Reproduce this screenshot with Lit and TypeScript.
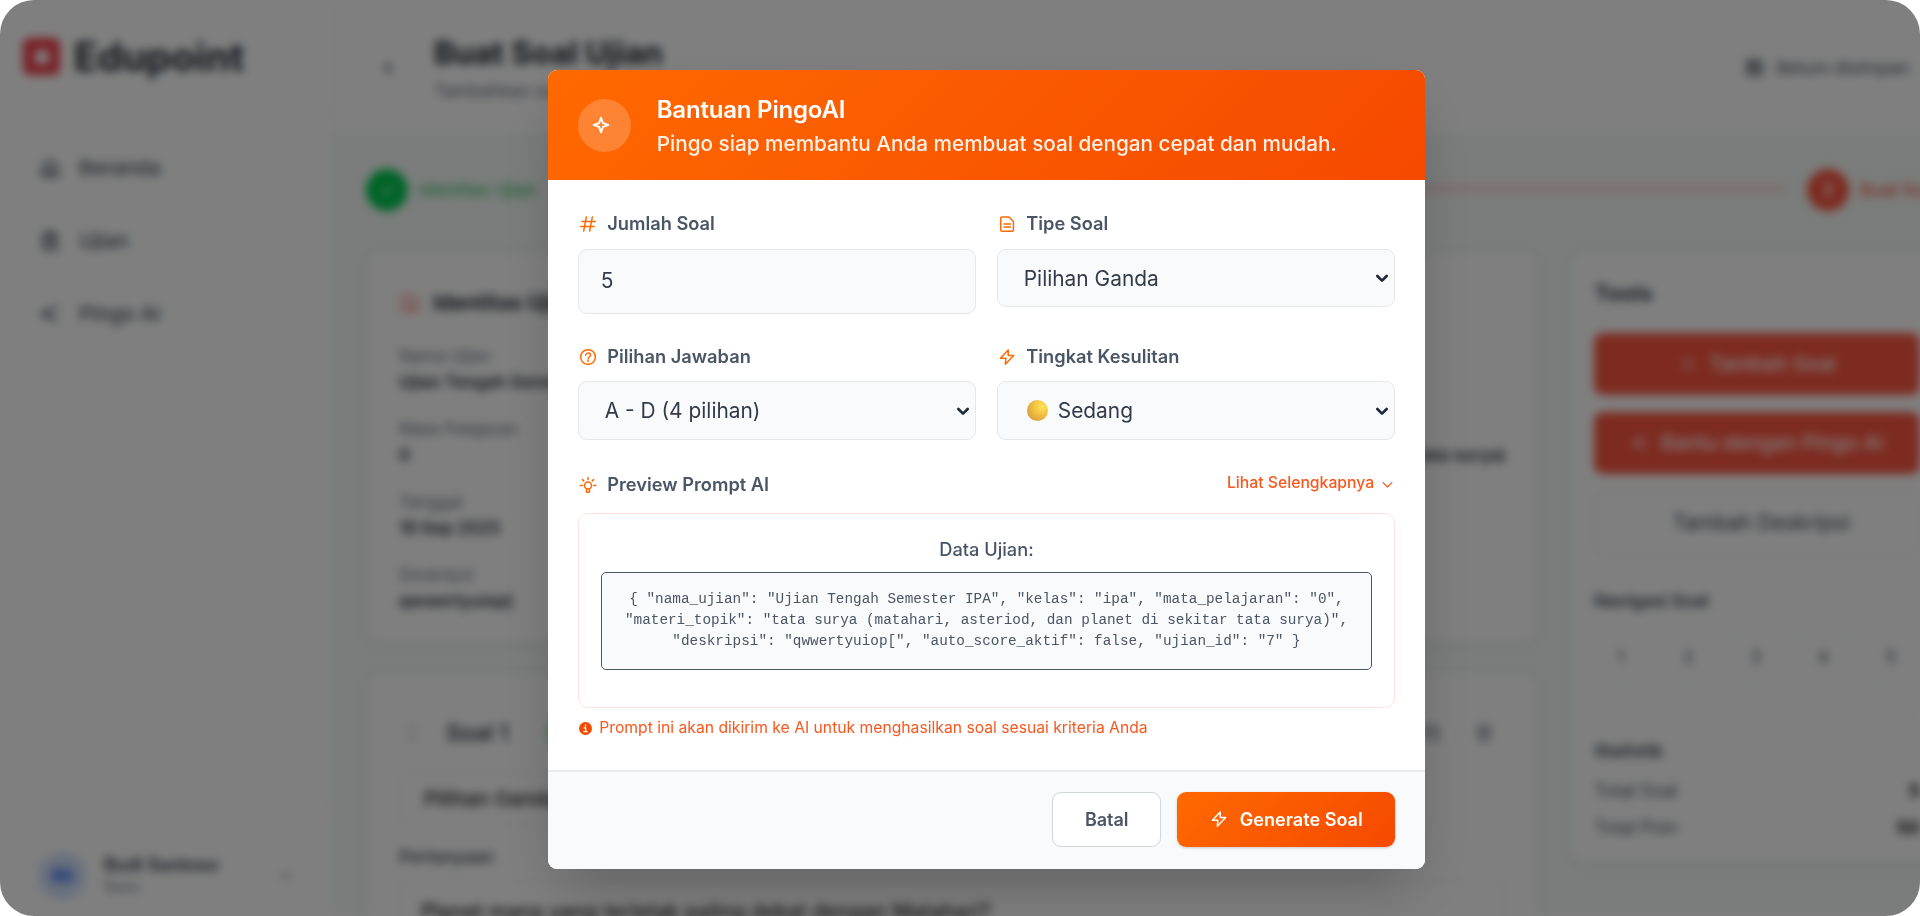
import { LitElement, html, css, svg, nothing } from "lit";
import { customElement, property } from "lit/decorators.js";

const glyphs: Record<string, unknown> = {
  sparkle: svg`<path d="M12 3.2 14.3 9.7 20.8 12 14.3 14.3 12 20.8 9.7 14.3 3.2 12 9.7 9.7Z"/>`,
  hash: svg`<path d="M9.8 2.6 6.2 21.4M17.8 2.6 14.2 21.400M3.800 8.600h18M2.200 15.400h18"/>`,
  file: svg`<path d="M6 2.6h8.6L20.6 8.6V19.6a2 2 0 0 1-2 2H5.6a2 2 0 0 1-2-2V4.6a2 2 0 0 1 2-2ZM8 12h8.6M8 16h8.6"/>`,
  help: svg`<circle cx="12" cy="12" r="9.8"/><path d="M8.8 9.2c.4-1.9 1.7-2.6 3.4-2.6 2 0 3.3 1.100 3.300 2.800 0 2.300-3.300 2.300-3.300 4.800M12.100 16.400v1.500"/>`,
  bolt: svg`<path d="M13.600 2.600 3.200 13.600H10.400L9.800 21.600 20.800 10H13.600Z"/>`,
  bulb: svg`<circle cx="12" cy="12.600" r="4.700"/><path d="M10 17v3.600a1 1 0 0 0 1 1h2a1 1 0 0 0 1-1V17M12 2v2.500M1.600 12.600h2.600M19.800 12.600h2.600M4.600 4.800 6.300 6.500M19.400 4.800 17.700 6.500"/>`,
  chevron: svg`<path d="m5 9 7 7 7-7"/>`,
  home: svg`<path d="M3.500 10.500 12 3.500l8.500 7v10h-17ZM9 20v-6h6v6"/>`,
  clip: svg`<path d="M5 4.500h14v16.500H5ZM9 3h6v3H9ZM9 11h6M9 15h6"/>`,
  share: svg`<path d="M20 4 5 12l15 8M4 9.500v5M9 8v8"/>`,
  back: svg`<path d="M15 7 9 12l6 5"/>`,
  save: svg`<path d="M4 4h13l3 3v13H4ZM8 4v5h7V4M8 20v-7h8v7"/>`,
  check: svg`<path d="m5 12.500 4.500 4.500L19 7.500"/>`,
  plus: svg`<path d="M12 5v14M5 12h14"/>`,
  grip: svg`<path d="M9 5v.1M9 12v.1M9 19v.1M15 5v.1M15 12v.1M15 19v.1"/>`,
  copy: svg`<path d="M8 8h12v12H8ZM16 8V4H4v12h4"/>`,
  trash: svg`<path d="M4 6.500h16M6 6.500V21h12V6.500M9 6V3h6v3M10 11v6M14 11v6"/>`,
  info: svg`<circle cx="12" cy="12" r="12" fill="currentColor" stroke="none"/><path d="M12 5.500v2.200M9.500 11h2.800v6.500M9 17.800h6" stroke="#fff" stroke-width="2.400"/>`,
};

@customElement("ui-icon")
export class UiIcon extends LitElement {
  @property() name = "";
  @property({ type: Number }) size = 18;
  @property({ type: Number }) weight = 2;
  static styles = css`
    :host { display: inline-flex; flex: none; }
    svg { display: block; fill: none; stroke: currentColor; stroke-linecap: round; stroke-linejoin: round; }
  `;
  render() {
    return html`<svg width=${this.size} height=${this.size} viewBox="0 0 24 24" stroke-width=${this.weight}>
      ${glyphs[this.name] ?? nothing}
    </svg>`;
  }
}

@customElement("exam-page")
export class ExamPage extends LitElement {
  static styles = css`
    :host { display: grid; grid-template-columns: 334px 1fr; width: 1944px; height: 916px; background: #f5faf7; font-size: 17.5px; line-height: 26px; color: #374151; }
    .side { display: flex; flex-direction: column; background: #fff; border-right: 1px solid #e5e7eb; box-sizing: border-box; height: 916px; }
    .brand { display: flex; align-items: center; gap: 14px; height: 114px; box-sizing: border-box; padding-left: 23px; border-bottom: 1px solid #e9eaec; font-size: 39px; font-weight: 700; color: #1f2937; }
    .logo { display: grid; place-items: center; width: 37px; height: 37px; border-radius: 7px; background: #f2404a; }
    .dot { width: 14px; height: 14px; border-radius: 4px; background: #fff; }
    nav { display: flex; flex-direction: column; gap: 47px; padding: 41px 0 0 39px; flex: 1; color: #4b5563; font-size: 20.500px; font-weight: 500; }
    .item { display: flex; align-items: center; gap: 18px; }
    .user { display: flex; align-items: center; gap: 18px; height: 106px; box-sizing: border-box; border-top: 1px solid #e9eaec; padding: 24px 40px 0 38px; }
    .avatar { display: grid; place-items: center; width: 48px; height: 48px; border-radius: 50%; background: #d3e2fe; color: #2563eb; font-weight: 700; font-size: 18px; letter-spacing: -1px; }
    .who { flex: 1; line-height: 22px; font-size: 15.300px; color: #6b7280; }
    .who b { display: block; font-size: 18px; font-weight: 600; color: #374151; }
    .main { display: flex; flex-direction: column; min-width: 0; height: 916px; }
    header { display: flex; flex: none; height: 136px; box-sizing: border-box; background: #fff; border-bottom: 1px solid #e5e7eb; padding: 0 34px 0 43px; align-items: center; color: #4b5563; }
    .ttl { flex: 1; margin-left: 35px; padding-top: 1px; font-size: 17.500px; color: #6b7280; }
    .ttl b { display: block; font-size: 31.300px; line-height: 46px; color: #1f2937; }
    .ttl div { line-height: 30px; }
    .status { display: flex; gap: 12px; align-items: center; font-size: 17.800px; }
    .steps { display: flex; flex: none; align-items: center; height: 108px; padding-left: 32px; font-size: 17.500px; font-weight: 500; }
    .num { display: grid; place-items: center; width: 42px; height: 42px; border-radius: 50%; color: #fff; background: #00c950; font-weight: 600; }
    .name { color: #22b85c; margin-left: 11px; width: 130px; font-weight: 400; }
    .line { flex: 1; height: 5px; background: #ffcfc9; margin: 0 22px 4px 20px; }
    .red { background: #fb5640; }
    .two { color: #fb5640; width: 84px; white-space: nowrap; font-weight: 500; }
    .cols { display: flex; gap: 32px; align-items: flex-start; padding-left: 33px; margin-top: 8px; }
    .card { background: #fff; border-radius: 14px; box-shadow: 0 1px 4px #0002; border: 1px solid #edeff1; box-sizing: border-box; }
    .left { width: 1172px; display: flex; flex-direction: column; gap: 31px; }
    .ident { height: 391px; padding: 35px 31px; }
    .head { display: flex; align-items: center; gap: 12px; color: #1f2937; font-size: 20.800px; font-weight: 700; line-height: 30px; margin-bottom: 26px; }
    .head ui-icon { color: #f77a70; }
    .facts { display: grid; grid-template-columns: 1fr 1fr; row-gap: 22px; line-height: 25.500px; color: #6b7280; font-size: 17px; }
    .facts b { display: block; font-weight: 600; color: #1f2937; white-space: nowrap; }
    .end { justify-self: end; }
    .q { height: 300px; padding: 44px 31px; }
    .qhead { display: flex; align-items: center; gap: 21px; font-size: 22.500px; font-weight: 600; color: #374151; padding-right: 12px; }
    .qhead ui-icon { color: #6b7280; }
    .tag { width: 90px; height: 28px; border-radius: 14px; background: #a5f0c0; margin-left: 16px; }
    .grow { flex: 1; }
    .gap { margin-left: 11px; }
    .field { border: 1px solid #e2e4e8; border-radius: 9px; color: #222; font-size: 20.500px; font-weight: 500; padding: 12px 24px; margin-top: 26px; width: 330px; box-sizing: border-box; }
    .lab { margin-top: 21px; font-weight: 500; font-size: 17.500px; line-height: 22px; }
    .area { width: auto; margin: 13px 0 0; padding: 17px 21px; height: 100px; font-size: 20.800px; }
    .right { width: 374px; height: 611px; padding: 27px 23px; }
    .right h3 { margin: 0 0 26px; font-size: 22px; line-height: 27px; color: #374151; }
    .btn { display: flex; align-items: center; justify-content: center; gap: 12px; height: 62px; border-radius: 9px; background: #fb5640; color: #fff; font-size: 20.500px; font-weight: 500; margin-bottom: 17px; }
    .out { background: #fff; border: 1px solid #dfe2e6; color: #374151; height: 62px; margin-bottom: 34px; font-weight: 400; font-size: 21px; padding-left: 8px; }
    h4 { margin: 0; font-size: 17.500px; line-height: 24px; font-weight: 600; color: #374151; }
    .grid { display: flex; gap: 14.500px; margin: 18px 0 31px; }
    .grid span { display: grid; place-items: center; width: 53px; height: 52px; box-sizing: border-box; border: 1px solid #eceef1; border-radius: 8px; color: #4b5563; flex: none; }
    .stat { border-top: 1px solid #e5e7eb; padding-top: 24px; }
    .row { display: flex; justify-content: space-between; margin-top: 18px; line-height: 19px; font-size: 18px; color: #4b5563; }
    .row b { color: #222; }
  `;
  render() {
    return html`
      <div class="side">
        <div class="brand"><span class="logo"><span class="dot"></span></span>Edupoint</div>
        <nav>
          <div class="item"><ui-icon name="home" size="22" weight="2.500"></ui-icon>Beranda</div>
          <div class="item"><ui-icon name="clip" size="22" weight="2.500"></ui-icon>Ujian</div>
          <div class="item"><ui-icon name="share" size="22" weight="2.500"></ui-icon>Pingo AI</div>
        </nav>
        <div class="user"><span class="avatar">BS</span><div class="who"><b>Budi Santoso</b>Guru</div><ui-icon name="chevron" size="14"></ui-icon></div>
      </div>
      <div class="main">
        <header>
          <ui-icon name="back" size="22" weight="2.500"></ui-icon>
          <div class="ttl"><b>Buat Soal Ujian</b><div>Tambahkan soal untuk ujian</div></div>
          <div class="status"><ui-icon name="save" size="21" weight="2.500"></ui-icon>Belum disimpan</div>
        </header>
        <div class="steps">
          <span class="num"><ui-icon name="check" size="18"></ui-icon></span><span class="name">Identitas Ujian</span>
          <span class="line"></span><span class="num red">2</span><span class="name two">Buat Soal</span>
        </div>
        <div class="cols">
          <div class="left">
            <div class="card ident">
              <div class="head"><ui-icon name="file" size="22"></ui-icon>Identitas Ujian</div>
              <div class="facts">
                <div>Nama Ujian<b>Ujian Tengah Semester IPA</b></div><div></div>
                <div>Mata Pelajaran<b>0</b></div><div class="end">Materi / Topik<b>tata surya (matahari, asteriod, dan planet di sekitar tata surya)</b></div>
                <div>Tanggal<b>19 Sep 2025</b></div><div></div>
                <div>Deskripsi<b>qwwertyuiop[</b></div>
              </div>
            </div>
            <div class="card q">
              <div class="qhead"><ui-icon name="grip" size="26"></ui-icon>Soal 1<span class="tag"></span><span class="grow"></span>
                <ui-icon name="copy" size="20"></ui-icon><ui-icon class="gap" name="trash" size="20"></ui-icon></div>
              <div class="field">Pilihan Ganda</div>
              <div class="lab">Pertanyaan</div>
              <div class="field area">Planet mana yang terletak paling dekat dengan Matahari?</div>
            </div>
          </div>
          <div class="card right">
            <h3>Tools</h3>
            <div class="btn"><ui-icon name="plus" size="18"></ui-icon>Tambah Soal</div>
            <div class="btn"><ui-icon name="share" size="18"></ui-icon>Bantu dengan Pingo AI</div>
            <div class="btn out">Tambah Deskripsi</div>
            <h4>Navigasi Soal</h4>
            <div class="grid">${[1, 2, 3, 4, 5].map((n) => html`<span>${n}</span>`)}</div>
            <div class="stat"><h4>Statistik</h4>
              <div class="row">Total Soal<b>5</b></div><div class="row">Total Poin<b>50</b></div>
            </div>
          </div>
        </div>
      </div>`;
  }
}

@customElement("ai-dialog")
export class AiDialog extends LitElement {
  static styles = css`
    :host { display: flex; flex-direction: column; width: 877.500px; height: 799px; border-radius: 9px; overflow: hidden; background: #fff; box-shadow: 0 27px 55px -13px rgba(0, 0, 0, 0.25); color: #475467; }
    .top { display: flex; align-items: center; gap: 26px; height: 110px; flex: none; box-sizing: border-box; padding: 0 30px; color: #fff; background: linear-gradient(135deg, #ff6900, #f54900); }
    .badge { display: flex; align-items: center; width: 53px; height: 53px; border-radius: 50%; background: #fff3; box-sizing: border-box; padding-left: 13px; }
    .titles { padding-top: 4px; }
    .t1 { font-size: 24px; font-weight: 600; line-height: 34px; letter-spacing: -0.200px; }
    .t2 { font-size: 20.720px; line-height: 34px; font-weight: 500; color: #fff0e6; }
    .body { flex: 1; padding: 32px 30px 0; }
    .pair { display: grid; grid-template-columns: 1fr 1fr; gap: 20.500px; align-items: start; }
    .label { display: flex; align-items: center; gap: 10px; font-size: 18.250px; font-weight: 600; line-height: 22px; padding-left: 1.500px; color: #4a5565; }
    .label ui-icon { color: #ff6900; margin-top: 1px; }
    .box { display: flex; align-items: center; height: 58px; box-sizing: border-box; border: 1px solid #e5e7eb; border-radius: 9px; background: #f9fafb; color: #323b4b; font-size: 20.900px; margin-top: 15px; padding: 0 4px 0 26px; }
    .box ui-icon { color: #1e2939; }
    .box.num { height: 65px; padding-left: 22px; padding-bottom: 2px; }
    .second { margin-top: 31px; }
    .second .box { margin-top: 14px; height: 59px; }
    .val { flex: 1; display: flex; align-items: center; gap: 10px; }
    .ball { width: 21px; height: 21px; border-radius: 50%; margin-left: 3px; background: radial-gradient(circle at 72% 30%, #ffe55c 0, #f2c143 40%, #d79a3a 85%, #d97b55 100%); }
    .prev { display: flex; justify-content: space-between; margin-top: 33px; }
    .more { display: flex; align-items: center; gap: 6px; color: #f9571e; font-size: 15.750px; font-weight: 500; line-height: 20px; height: 20px; }
    .more ui-icon { margin-top: 2px; }
    .pane { margin-top: 18px; height: 195px; box-sizing: border-box; border: 1.500px solid #ffe2dd; border-radius: 10px; padding: 24px 22px; text-align: center; font-size: 18.200px; font-weight: 500; line-height: 22px; }
    pre { margin: 12px 0 0; box-sizing: border-box; height: 98px; border: 1.500px solid #4a5565; border-radius: 5px; background: #f9fafb; padding: 16px 0 0; font: 14.350px/21px "Liberation Mono", monospace; color: #4a5565; }
    .note { display: flex; align-items: center; gap: 7px; margin-top: 10px; padding-left: 1.500px; color: #f9571e; font-size: 15.700px; line-height: 20px; }
    .note ui-icon { color: #f54900; margin-top: 1px; }
    .foot { display: flex; justify-content: flex-end; gap: 16px; height: 99px; flex: none; box-sizing: border-box; border-top: 2px solid #eaecef; background: #f9fafb; padding: 20px 30px 0; }
    button { font: 600 18px/22px "Inter", sans-serif; height: 55px; border-radius: 9px; border: 1px solid #d1d5dc; background: #fff; color: #4a5565; width: 109px; padding: 0; }
    .go { display: flex; align-items: center; justify-content: center; gap: 12px; border: 0; width: 218px; color: #fff; font-weight: 600; font-size: 18.100px; padding-bottom: 1px; background: linear-gradient(135deg, #ff6900, #f54900); box-shadow: 0 1px 3px #0003; }
  `;
  private select(label: string, icon: string, value: unknown) {
    return html`<div>
      <div class="label"><ui-icon name=${icon} size="18"></ui-icon>${label}</div>
      <div class="box"><span class="val">${value}</span><ui-icon name="chevron" size="16" weight="4"></ui-icon></div>
    </div>`;
  }
  render() {
    return html`
      <div class="top">
        <span class="badge"><ui-icon name="sparkle" size="20" weight="2.300"></ui-icon></span>
        <div class="titles"><div class="t1">Bantuan PingoAI</div><div class="t2">Pingo siap membantu Anda membuat soal dengan cepat dan mudah.</div></div>
      </div>
      <div class="body">
        <div class="pair">
          <div><div class="label"><ui-icon name="hash" size="18"></ui-icon>Jumlah Soal</div><div class="box num">5</div></div>
          ${this.select("Tipe Soal", "file", "Pilihan Ganda")}
        </div>
        <div class="pair second">
          ${this.select("Pilihan Jawaban", "help", "A - D (4 pilihan)")}
          ${this.select("Tingkat Kesulitan", "bolt", html`<span class="ball"></span>Sedang`)}
        </div>
        <div class="prev">
          <div class="label"><ui-icon name="bulb" size="18"></ui-icon>Preview Prompt AI</div>
          <div class="more">Lihat Selengkapnya<ui-icon name="chevron" size="15"></ui-icon></div>
        </div>
        <div class="pane">Data Ujian:<pre>{ "nama_ujian": "Ujian Tengah Semester IPA", "kelas": "ipa", "mata_pelajaran": "0",
"materi_topik": "tata surya (matahari, asteriod, dan planet di sekitar tata surya)",
"deskripsi": "qwwertyuiop[", "auto_score_aktif": false, "ujian_id": "7" }</pre></div>
        <div class="note"><ui-icon name="info" size="13"></ui-icon>Prompt ini akan dikirim ke AI untuk menghasilkan soal sesuai kriteria Anda</div>
      </div>
      <div class="foot"><button>Batal</button><button class="go"><ui-icon name="bolt" size="18"></ui-icon>Generate Soal</button></div>`;
  }
}

@customElement("app-root")
export class AppRoot extends LitElement {
  static styles = css`
    :host { display: block; width: 1920px; height: 916px; background: #fff; font-family: "Inter", sans-serif; }
    .frame { position: relative; width: 1920px; height: 916px; overflow: hidden; border-radius: 34px; }
    exam-page { filter: blur(4.800px); }
    .under { background: #fff; }
    .veil { position: absolute; inset: 0; box-sizing: border-box; display: flex; justify-content: center; align-items: flex-start; padding: 70px 0 0 53px; background: rgba(0, 0, 0, 0.5); }
  `;
  render() {
    return html`<div class="frame"><div class="under"><exam-page></exam-page></div><div class="veil"><ai-dialog></ai-dialog></div></div>`;
  }
}
